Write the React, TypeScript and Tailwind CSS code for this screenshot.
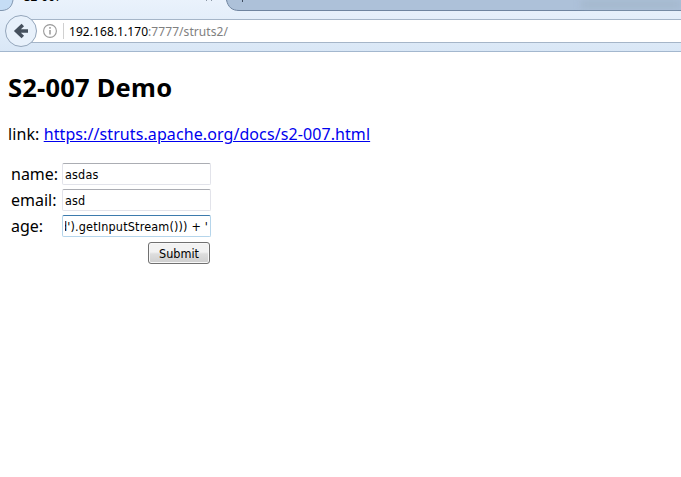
import type { ReactNode } from 'react';

function TabStrip() {
  return (
    <div className="relative flex h-[11px] shrink-0 overflow-hidden">
      <svg className="absolute inset-0" width="681" height="11" viewBox="0 0 681 11">
        <path d="M0 0H13C12 6 9 10 2 10.5H0Z" fill="#c5ddf5" />
        <path d="M13 0C12 6 9 10 2 10.5H0" fill="none" stroke="#8196af" />
        <path d="M226.500 0C228 7 232 10.500 239 10.500H681V0Z" fill="#adc1d9" />
        <path d="M226.500 0C228 7 232 10.500 239 10.500H681" fill="none" stroke="#6f849f" />
        <path d="M206.500 0v1M211.500 0v1" stroke="#8c98a6" />
        <path d="M242.500 0v2" stroke="#3d4a5c" />
      </svg>
      <span className="absolute right-0 top-0 h-[9px] w-[100px] bg-[#9eb1c6]/50 blur-[3px]" />
      <span className="relative ml-6 -mt-[11px] h-[15px] whitespace-nowrap text-[12px] leading-[15px] text-black">
        S2-007
      </span>
    </div>
  );
}

function AddressBar() {
  return (
    <div className="relative flex h-[41px] shrink-0 border-b border-[#a3b7ce] pt-2">
      <div className="ml-5 flex h-6 flex-1 items-center border-y border-[#a5b5c8] bg-white pl-[22px]">
        <svg width="16" height="16" viewBox="0 0 16 16" fill="none" stroke="#999">
          <circle cx="8" cy="8" r="6.400" strokeWidth="1.100" />
          <path d="M8 7v4.500M8 4v1.700" strokeWidth="1.500" />
        </svg>
        <span className="ml-[5px] h-4 w-px bg-[#d0d0d0]" />
        <span className="ml-[5px] w-[160px] whitespace-nowrap pt-px text-[12px] leading-4 tracking-[0.060px] text-[#808080]">
          <span className="text-black">192.168.1.170</span>:7777/struts2/
        </span>
      </div>
      <svg className="absolute left-[4px] top-[3px]" width="34" height="34" viewBox="0 0 34 34">
        <circle cx="17" cy="17" r="15.500" fill="#e8f1fb" stroke="#94a6bb" />
        <path d="M18.800 11L12.500 17L18.800 23M12.500 17H24" fill="none" stroke="#46515e" strokeWidth="3.600" />
      </svg>
    </div>
  );
}

function Field({ label, focused = false, children }: { label: string; focused?: boolean; children: ReactNode }) {
  return (
    <div className="flex h-[22px] items-center">
      <span className="w-[51px] whitespace-nowrap text-[16px] leading-[22px]">{label}</span>
      <div
        className={
          focused
            ? 'flex h-[22px] w-[149px] items-center overflow-hidden rounded-[2px] border border-[#b5d5eb] border-t-[#3d7bad] bg-white px-[2px]'
            : 'flex h-[22px] w-[149px] items-center overflow-hidden rounded-[2px] border border-[#e2e3ea] border-t-[#abadb3] bg-white px-[2px]'
        }
      >
        <div className={focused ? 'flex w-full justify-end overflow-hidden' : 'flex w-full overflow-hidden'}>
          <span className="whitespace-nowrap pt-px font-['DejaVu_Sans_Condensed','DejaVu_Sans',sans-serif] text-[12.500px] leading-[18px] tracking-[0.170px] [font-stretch:condensed]">
            {children}
          </span>
        </div>
      </div>
    </div>
  );
}

export default function App() {
  return (
    <div className="flex h-[477px] w-[681px] flex-col overflow-hidden bg-white font-['Noto_Sans',sans-serif] text-black">
      <header className="flex h-[52px] flex-col bg-linear-to-b from-[#eaf2fc] to-[#d9e7f6]">
        <TabStrip />
        <AddressBar />
      </header>
      <main className="flex flex-col items-start pl-2">
        <h2 className="mt-[19px] whitespace-nowrap text-[25.500px] font-bold leading-8 tracking-[0.220px]">S2-007 Demo</h2>
        <p className="mt-5 whitespace-nowrap text-[16px] leading-[22px] tracking-[0.090px]">
          link: <a className="text-[#0000ee] underline underline-offset-1">https://struts.apache.org/docs/s2-007.html</a>
        </p>
        <form className="ml-[3px] mt-[18px] flex w-[200px] flex-col gap-1">
          <Field label="name:">asdas</Field>
          <Field label="email:">asd</Field>
          <Field label="age:" focused>{"d').getInputStream())) + '"}</Field>
          <button
            type="button"
            className="mr-px mt-px h-[22px] w-[62px] self-end rounded-[3px] border border-[#707070] bg-linear-to-b from-[#f2f2f2] from-45% via-[#dddddd] via-55% to-[#cfcfcf] pt-px font-['DejaVu_Sans_Condensed','DejaVu_Sans',sans-serif] text-[12.500px] leading-5 shadow-[inset_0_0_0_1px_#f8f8f8] [font-stretch:condensed]"
          >
            Submit
          </button>
        </form>
      </main>
    </div>
  );
}
